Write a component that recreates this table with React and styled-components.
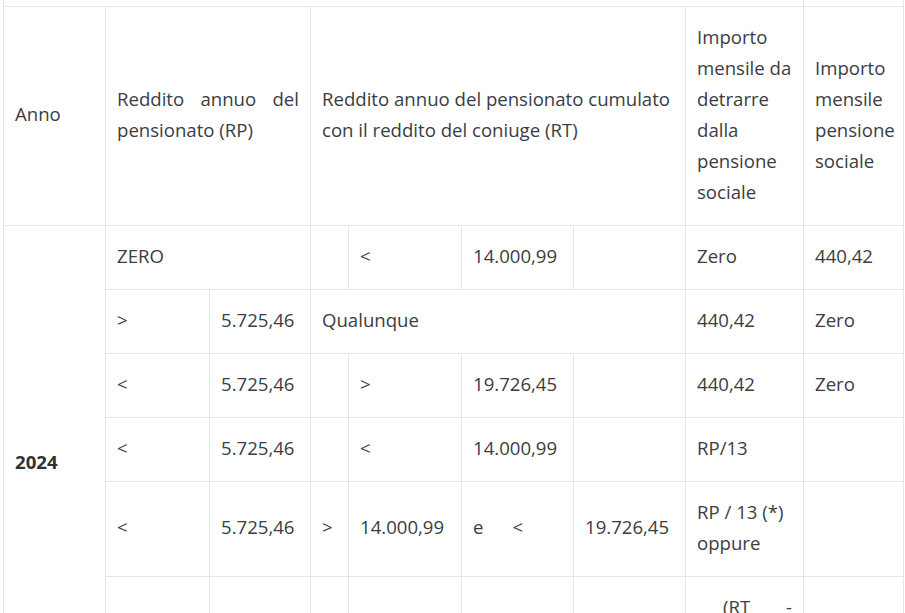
import React from 'react';
import styled, { createGlobalStyle } from 'styled-components';

const GlobalStyle = createGlobalStyle`
  body {
    margin: 0;
    background: #ffffff;
    font-family: "Open Sans", "Noto Sans", sans-serif;
    color: #3a3d42;
  }
`

const Page = styled.div`
  padding: 0 2px 0 3px;
  overflow: hidden;
  height: 613px;
`

const Table = styled.table`
  border-collapse: collapse;
  table-layout: fixed;
  width: 900px;
  margin-top: -1px;
  font-size: 18.6px;
  line-height: 31px;
`

const Row = styled.tr`
  height: ${p => p.$height || 'auto'};
`

const Cell = styled.td`
  border: 1px solid #e1e7ee;
  padding: ${p => (p.$spacer ? '0' : '14px 11px 18px')};
  vertical-align: middle;
  text-align: ${p => (p.$justify ? 'justify' : 'left')};
  text-indent: ${p => p.$indent || 0};
  font-weight: ${p => (p.$bold ? 700 : 400)};
  color: ${p => (p.$bold ? '#2f3236' : 'inherit')};
  border-top: ${p => (p.$spacer ? 'none' : '1px solid #e1e7ee')};
`

const widths = [102, 104, 101, 38, 113, 112, 112, 118, 100]

const App = () => (
  <Page>
    <GlobalStyle />
    <Table>
      <colgroup>
        {widths.map((w, i) => <col key={i} style={{ width: w }} />)}
      </colgroup>
      <tbody>
        <Row $height="7px">
          <Cell $spacer colSpan={8} />
          <Cell $spacer />
        </Row>
        <tr>
          <Cell>Anno</Cell>
          <Cell colSpan={2} $justify>Reddito annuo del pensionato (RP)</Cell>
          <Cell colSpan={4}>Reddito annuo del pensionato cumulato con il reddito del coniuge (RT)</Cell>
          <Cell>Importo mensile da detrarre dalla pensione sociale</Cell>
          <Cell>Importo mensile pensione sociale</Cell>
        </tr>
        <tr>
          <Cell rowSpan={6} $bold>2024</Cell>
          <Cell colSpan={2}>ZERO</Cell>
          <Cell />
          <Cell>&lt;</Cell>
          <Cell>14.000,99</Cell>
          <Cell />
          <Cell>Zero</Cell>
          <Cell>440,42</Cell>
        </tr>
        <tr>
          <Cell>&gt;</Cell>
          <Cell>5.725,46</Cell>
          <Cell colSpan={4}>Qualunque</Cell>
          <Cell>440,42</Cell>
          <Cell>Zero</Cell>
        </tr>
        <tr>
          <Cell>&lt;</Cell>
          <Cell>5.725,46</Cell>
          <Cell />
          <Cell>&gt;</Cell>
          <Cell>19.726,45</Cell>
          <Cell />
          <Cell>440,42</Cell>
          <Cell>Zero</Cell>
        </tr>
        <tr>
          <Cell>&lt;</Cell>
          <Cell>5.725,46</Cell>
          <Cell />
          <Cell>&lt;</Cell>
          <Cell>14.000,99</Cell>
          <Cell />
          <Cell>RP/13</Cell>
          <Cell />
        </tr>
        <tr>
          <Cell>&lt;</Cell>
          <Cell>5.725,46</Cell>
          <Cell>&gt;</Cell>
          <Cell>14.000,99</Cell>
          <Cell>e&nbsp;&nbsp;&nbsp;&nbsp;&nbsp;&nbsp;&lt;</Cell>
          <Cell>19.726,45</Cell>
          <Cell>RP / 13 (*) oppure</Cell>
          <Cell />
        </tr>
        <tr>
          <Cell />
          <Cell />
          <Cell />
          <Cell />
          <Cell />
          <Cell />
          <Cell $justify $indent="26px">(RT - 14.000,99) / 13</Cell>
          <Cell />
        </tr>
      </tbody>
    </Table>
  </Page>
)

export default App
